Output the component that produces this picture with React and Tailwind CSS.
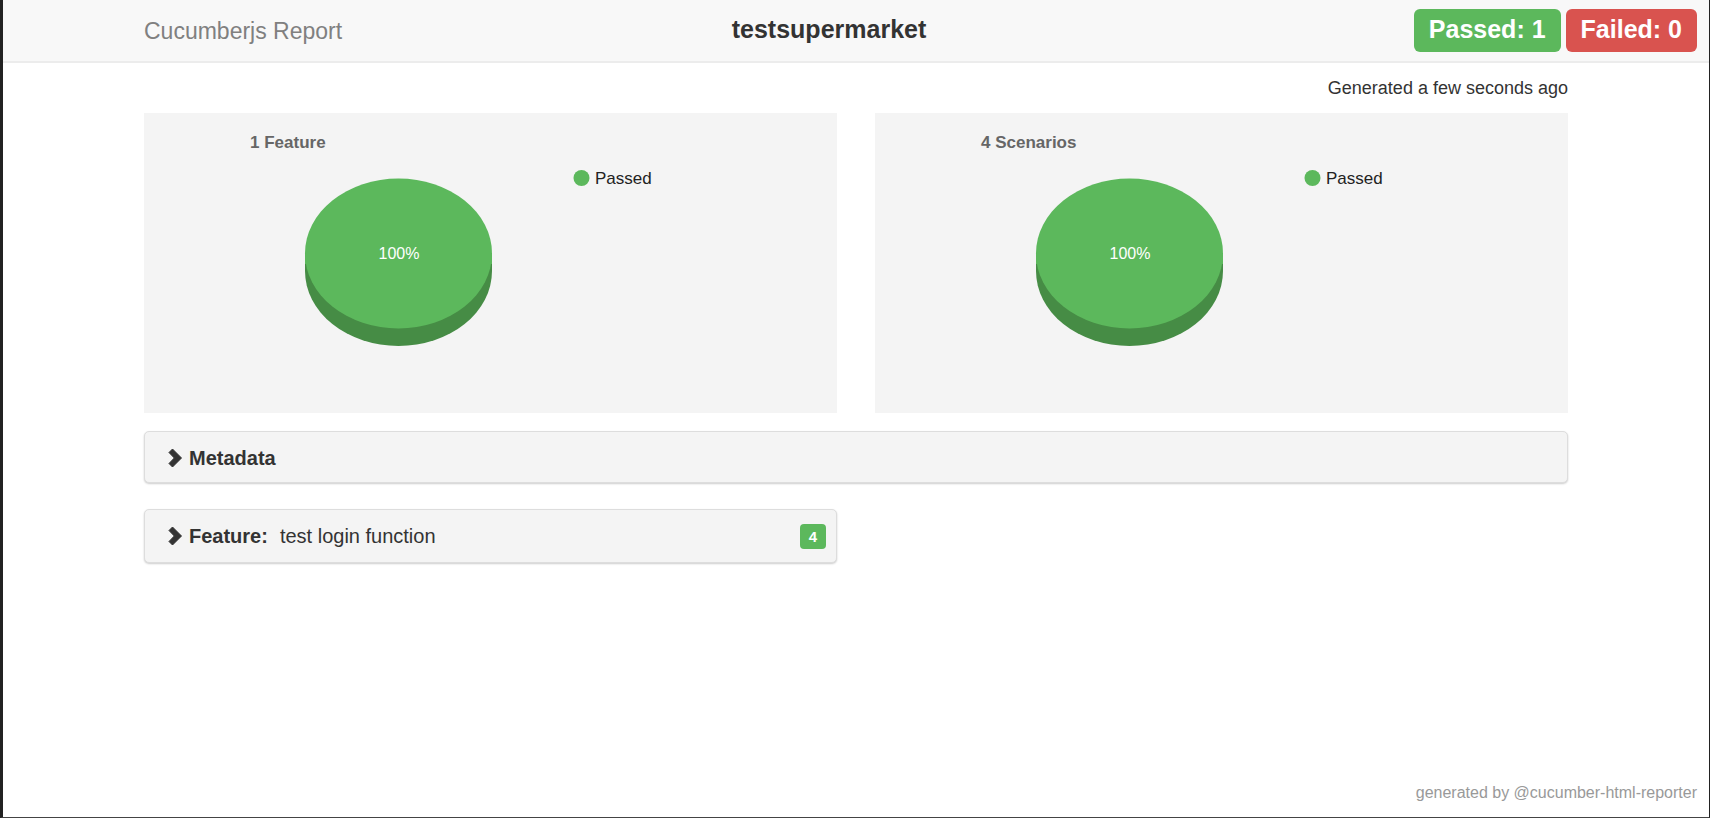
const FONT = "font-['Liberation_Sans',Arial,sans-serif]";

function PieChart({ title }) {
  return (
    <section className="bg-[#f4f4f4]">
      <svg viewBox="0 0 693 300" className="block w-full" role="img" aria-label={title}>
        <text x="106" y="35" fontSize="17" fontWeight="bold" fill="#666">{title}</text>
        <path d="M161 140v18a93.500 75 0 0 0 187 0v-18z" fill="#468c45" />
        <path d="M161 140h187v11h-187z" fill="#5cb85c" />
        <ellipse cx="254.500" cy="140.500" rx="93.500" ry="75" fill="#5cb85c" />
        <text x="255" y="146" fontSize="16" textAnchor="middle" fill="#fff">100%</text>
        <circle cx="437.500" cy="65" r="8" fill="#5cb85c" />
        <text x="451" y="71" fontSize="17" fill="#222">Passed</text>
      </svg>
    </section>
  );
}

function Chevron() {
  return (
    <svg viewBox="0 0 14 20" className="h-5 w-[14px] shrink-0" fill="#333" stroke="#333" strokeLinejoin="round" aria-hidden="true">
      <path d="M4.500 1 13.500 10 4.500 19 1 15.500 6.300 10 1 4.500z" />
    </svg>
  );
}

function Panel({ label, children, badge }) {
  return (
    <button
      type="button"
      aria-expanded="false"
      className={`flex w-full items-center rounded-[5px] border border-[#ddd] bg-[#f4f4f4] pr-[10px] pl-[23px] text-left text-[20px] leading-7 text-[#333] shadow-[0_1px_2px_rgba(0,0,0,0.2)] ${badge ? "py-3" : "pt-3 pb-[10px]"}`}
    >
      <Chevron />
      <span className="ml-[7px] font-bold">{label}</span>
      {children && <span className="ml-3">{children}</span>}
      {badge && (
        <span className="ml-auto rounded bg-[#5cb85c] px-[9px] text-[15px] leading-[25px] font-bold text-white">
          {badge}
        </span>
      )}
    </button>
  );
}

export default function App() {
  return (
    <div className={`flex min-h-screen flex-col border-r border-b border-l-[3px] border-r-[#222] border-b-[#444] border-l-[#222] bg-white text-[#333] ${FONT}`}>
      <header className="grid grid-cols-[27fr_auto_29fr] items-center border-b-2 border-[#ececec] bg-[#f8f8f8] pt-[9px] pb-[9px]">
        <a href="#" className="pl-[141px] text-[23px] leading-[30px] text-[#808080]">Cucumberjs Report</a>
        <h1 className="pb-1 text-[25px] leading-[30px] font-bold">testsupermarket</h1>
        <div className="flex justify-end gap-[5px] pr-3 text-[25px] leading-[30px] font-bold text-white">
          <span className="rounded-md bg-[#5cb85c] px-[15px] pt-[5px] pb-2">Passed: 1</span>
          <span className="rounded-md bg-[#d9534f] px-[15px] pt-[5px] pb-2">Failed: 0</span>
        </div>
      </header>

      <main className="px-[141px]">
        <p className="py-3 text-right text-[18px] leading-[26px]">Generated a few seconds ago</p>
        <div className="grid grid-cols-2 gap-[38px]">
          <PieChart title="1 Feature" />
          <PieChart title="4 Scenarios" />
        </div>
        <div className="mt-[18px]">
          <Panel label="Metadata" />
        </div>
        <div className="mt-[26px] grid grid-cols-2 gap-[38px]">
          <Panel label="Feature:" badge="4">test login function</Panel>
        </div>
      </main>

      <footer className="mt-auto pr-3 pb-3 text-right text-[16px] leading-6 text-[#999]">
        generated by @cucumber-html-reporter
      </footer>
    </div>
  );
}
